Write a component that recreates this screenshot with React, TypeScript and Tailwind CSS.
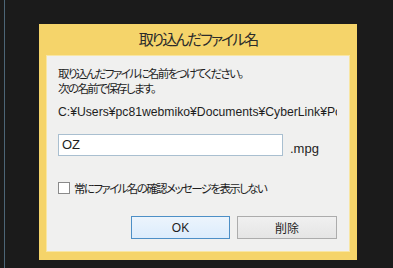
import React from "react";

const jp = "font-['Noto_Sans_CJK_JP','Noto_Sans',sans-serif] [font-feature-settings:'palt']";
const latin = "font-['Liberation_Sans','Noto_Sans',sans-serif]";

export default function App() {
    return (
        <div className="w-[393px] h-[268px] bg-[#1b1b1b] flex overflow-hidden">
            <div className="w-[4px] shrink-0" />
            <div className="w-px shrink-0 bg-[#4d6677]" />
            <div className="pl-[34px] pt-[24px]">
                <div className="w-[318px] h-[236px] bg-[#f5d46a] flex flex-col px-[7px] pb-[8px]">
                    <div className={`h-[31px] flex items-center justify-center text-[15px] tracking-[-2px] text-[#2b2b2b] ${jp}`}>
                        取り込んだファイル名
                    </div>
                    <div className="flex-1 bg-[#f0f0ef] border border-[#f8e6a4] pl-[11px] pr-[12px] pt-[10px] text-[#1e1e1e]">
                        <p className={`text-[11.5px] leading-[15px] tracking-[-1.6px] ${jp}`}>
                            取り込んだファイルに名前をつけてください。
                            <br />
                            次の名前で保存します。
                        </p>
                        <p className={`mt-[9px] text-[12.2px] leading-[14px] whitespace-nowrap overflow-hidden w-[279px] ${latin}`}>
                            C:¥Users¥pc81webmiko¥Documents¥CyberLink¥Pc
                        </p>
                        <div className="mt-[15px] flex items-end gap-[7px]">
                            <div className={`w-[225px] h-[22px] bg-white border border-[#a9bfd0] flex items-center pl-[3px] text-[13px] ${latin}`}>
                                OZ
                            </div>
                            <span className={`text-[13px] leading-[14px] ${latin}`}>.mpg</span>
                        </div>
                        <label className="mt-[25px] flex items-center gap-[4px]">
                            <span className="w-[12px] h-[12px] border border-[#8a8a8a] bg-white" />
                            <span className={`text-[11.5px] leading-[14px] tracking-[-1.6px] ${jp}`}>
                                常にファイル名の確認メッセージを表示しない
                            </span>
                        </label>
                        <div className="mt-[21px] flex justify-end gap-[7px]">
                            <button className={`w-[99px] h-[23px] border border-[#4d8fc6] bg-gradient-to-b from-[#ecf4fc] to-[#dcecfc] text-[12px] ${latin}`}>
                                OK
                            </button>
                            <button className={`w-[100px] h-[23px] border border-[#acacac] bg-gradient-to-b from-[#f0f0f0] to-[#e5e5e5] text-[12px] ${jp}`}>
                                削除
                            </button>
                        </div>
                    </div>
                </div>
            </div>
        </div>
    );
}
